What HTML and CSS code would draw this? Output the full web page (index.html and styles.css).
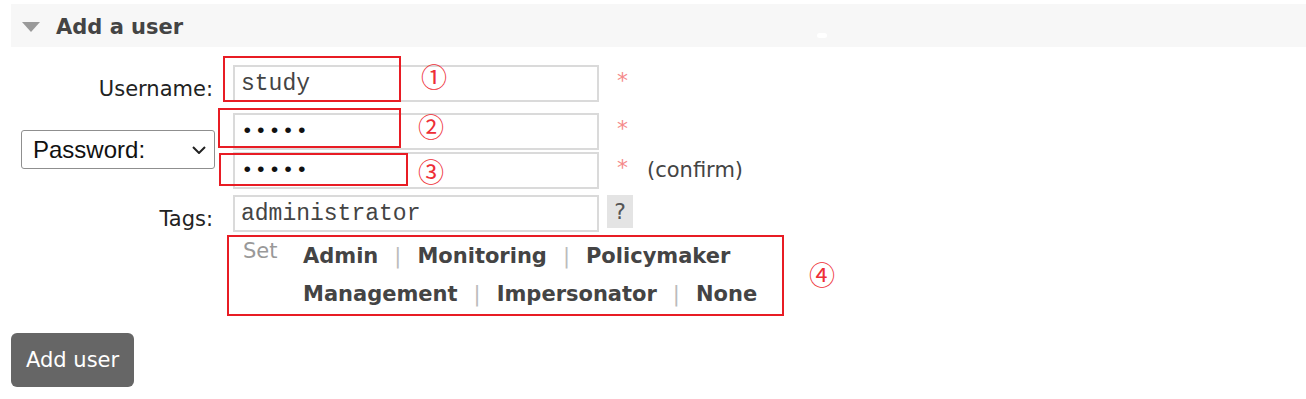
FILE: index.html
```html
<!DOCTYPE html>
<html lang="en">
<head>
<meta charset="utf-8">
<title>Add a user</title>
<link rel="stylesheet" href="styles.css">
</head>
<body>
<div class="page">
  <div class="section-head">
    <span class="tri"></span>
    <h2>Add a user</h2>
    <span class="speck"></span>
  </div>

  <form class="form">
    <div class="row row-user">
      <label class="lbl" for="u">Username:</label>
      <input id="u" class="field" type="text" value="study">
      <div class="extra"><span class="mand">*</span></div>
    </div>

    <div class="row row-pass">
      <div class="sel-cell">
        <div class="sel-wrap">
          <select class="sel">
            <option>Password:</option>
            <option>Hashed password:</option>
            <option>No password</option>
          </select>
          <svg class="chev" width="14" height="8" viewBox="0 0 14 8"><path d="M1 1 L7 7 L13 1" fill="none" stroke="#222" stroke-width="2"/></svg>
        </div>
      </div>
      <div class="stack">
        <input class="field" type="password" value="guest">
        <input class="field" type="password" value="guest">
      </div>
      <div class="stack">
        <div class="extra"><span class="mand">*</span></div>
        <div class="extra"><span class="mand">*</span><span class="confirm">(confirm)</span></div>
      </div>
    </div>

    <div class="row row-tags">
      <label class="lbl" for="t">Tags:</label>
      <input id="t" class="field" type="text" value="administrator">
      <div class="extra"><span class="help">?</span></div>
    </div>

    <div class="row row-links">
      <div></div>
      <div class="taglinks">
        <span class="set">Set</span>
        <div class="links">
          <div class="line"><a>Admin</a><span class="pipe">|</span><a>Monitoring</a><span class="pipe">|</span><a>Policymaker</a></div>
          <div class="line"><a>Management</a><span class="pipe">|</span><a>Impersonator</a><span class="pipe">|</span><a>None</a></div>
        </div>
      </div>
      <div></div>
    </div>

    <button class="btn" type="button">Add user</button>
  </form>

  <div class="mark m1"></div>
  <div class="mark m2"></div>
  <div class="mark m3"></div>
  <div class="mark m4"></div>
  <span class="num n1">①</span>
  <span class="num n2">②</span>
  <span class="num n3">③</span>
  <span class="num n4">④</span>
</div>
</body>
</html>
```
FILE: styles.css
```css
* { box-sizing: border-box; }
html, body { margin: 0; padding: 0; background: #fff; }
body {
  font-family: "DejaVu Sans", Verdana, sans-serif;
  font-size: 21px;
  color: #222;
  width: 1306px;
  height: 399px;
  overflow: hidden;
}
.page { position: relative; width: 1306px; height: 399px; padding-top: 4px; }

.section-head {
  position: relative;
  margin: 0 0 0 11px;
  height: 43px;
  background: #f7f7f7;
  display: flex;
  align-items: center;
}
.tri {
  width: 0; height: 0;
  margin-left: 11px;
  border-left: 9px solid transparent;
  border-right: 9px solid transparent;
  border-top: 10px solid #9a9a9a;
  margin-top: 2px;
}
.section-head h2 {
  margin: 0 0 0 16px;
  font-size: 21px;
  font-weight: bold;
  color: #444;
  line-height: 24px;
  padding-top: 2px;
}
.speck {
  position: absolute;
  left: 806px; top: 29px;
  width: 10px; height: 5px;
  border-radius: 3px;
  background: #fff;
}

.form { margin-left: 11px; }
.row {
  display: grid;
  grid-template-columns: 214px 366px auto;
  column-gap: 8px;
  justify-content: start;
}
.row-user { margin-top: 18px; }
.row-pass { margin-top: 11px; }
.row-tags { margin-top: 6px; }

.lbl {
  text-align: right;
  padding-right: 12px;
  padding-top: 12px;
  line-height: 24px;
  color: #222;
}
.field {
  width: 366px;
  height: 37px;
  border: 2px solid #dadada;
  padding: 0 6px;
  font-family: "Liberation Mono", "Courier New", monospace;
  font-size: 23px;
  color: #444;
  background: #fff;
  outline: none;
}
.field[type="password"] { letter-spacing: 1px; font-size: 21px; color: #111; }
.stack { display: flex; flex-direction: column; gap: 2px; }
.extra {
  height: 37px;
  display: flex;
  align-items: center;
  padding-left: 10px;
}
.mand {
  color: #f58a8a;
  font-size: 22px;
  line-height: 1;
  margin-top: -6px;
}
.confirm { margin-left: 19px; color: #444; line-height: 1; }
.help {
  display: inline-flex;
  align-items: center;
  justify-content: center;
  width: 26px;
  height: 33px;
  margin-left: -10px;
  margin-top: -4px;
  background: #e4e4e4;
  color: #555;
  font-size: 22px;
  line-height: 33px;
}

.sel-cell { display: flex; justify-content: flex-end; align-items: center; padding-right: 10px; padding-bottom: 4px; }
.sel-wrap { position: relative; width: 194px; height: 39px; }
.sel {
  appearance: none;
  -webkit-appearance: none;
  width: 194px;
  height: 39px;
  border: 1px solid #8f8f8f;
  border-radius: 3px;
  background: #fff;
  padding: 0 0 0 11px;
  font-family: "Liberation Sans", Arial, sans-serif;
  font-size: 24px;
  color: #111;
}
.chev { position: absolute; left: 171px; top: 16px; pointer-events: none; }

.taglinks {
  display: flex;
  padding-left: 10px;
  margin-top: 5px;
  width: max-content;
}
.set {
  color: #999;
  line-height: 28px;
  width: 60px;
  flex-shrink: 0;
}
.links { display: flex; flex-direction: column; flex-shrink: 0; }
.line { display: flex; gap: 16px; line-height: 38px; white-space: nowrap; }
.line a { font-weight: bold; color: #444; }
.pipe { color: #bbb; }

.btn {
  margin-top: 20px;
  height: 54px;
  padding: 0 15px;
  background: #666;
  color: #fff;
  border: none;
  border-radius: 6px;
  font-family: "DejaVu Sans", Verdana, sans-serif;
  font-size: 21px;
  line-height: 24px;
}

.mark {
  position: absolute;
  border: 2px solid #e81c24;
}
.m1 { left: 223px; top: 56px; width: 178px; height: 46px; }
.m2 { left: 218px; top: 108px; width: 183px; height: 40px; }
.m3 { left: 219px; top: 153px; width: 189px; height: 33px; }
.m4 { left: 227px; top: 235px; width: 557px; height: 81px; }

.num {
  position: absolute;
  font-family: "Noto Sans CJK SC", "DejaVu Sans", sans-serif;
  font-size: 26px;
  line-height: 1;
  color: #ee2e36;
}
.n1 { left: 421px; top: 63px; }
.n2 { left: 418px; top: 113px; }
.n3 { left: 418px; top: 158px; }
.n4 { left: 809px; top: 261px; }
```
